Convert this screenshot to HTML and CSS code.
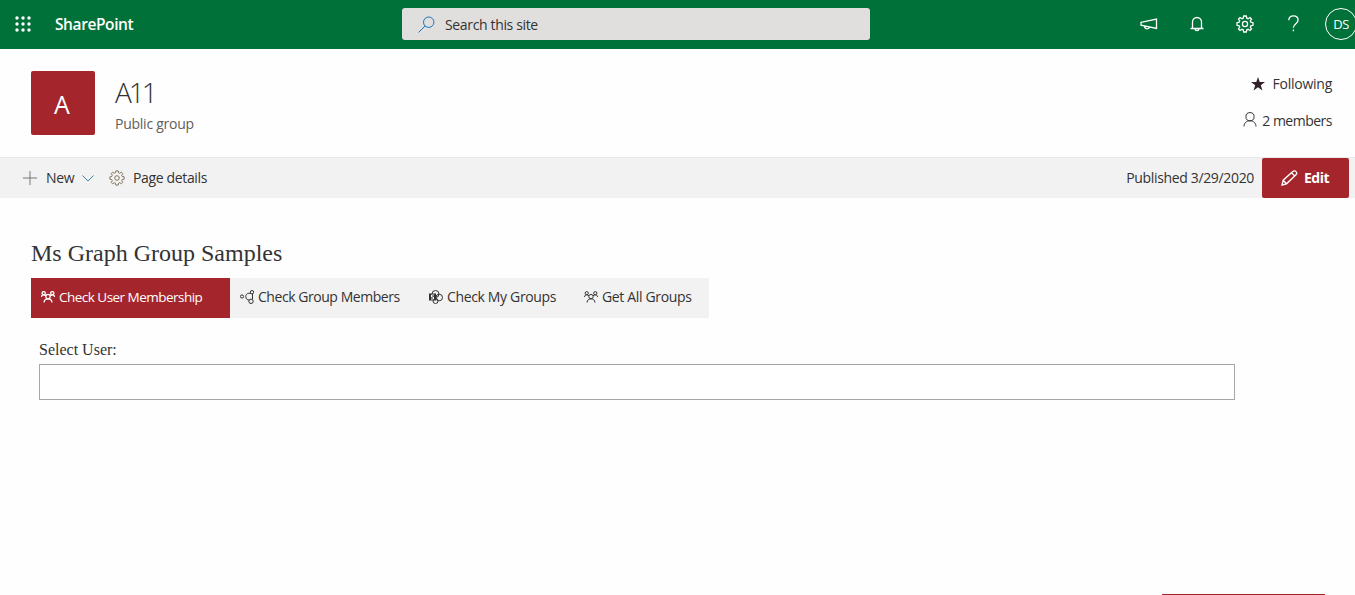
FILE: index.html
```html
<!DOCTYPE html>
<html lang="en">
<head>
<meta charset="utf-8">
<title>A11 - Ms Graph Group Samples</title>
<link rel="stylesheet" href="styles.css">
</head>
<body>
<svg class="defs" width="0" height="0">
  <symbol id="gear" viewBox="0 0 18 18"><path d="M7.700 1h2.600l.5 2.200 1.300.5 1.900-1.200L15.500 4l-1.200 1.900.5 1.300 2.200.5v2.600l-2.200.5-.5 1.300 1.200 1.900-1.500 1.500-1.900-1.200-1.300.5-.5 2.200H7.700l-.5-2.200-1.300-.5L4 15.500 2.500 14l1.200-1.900-.5-1.300L1 10.300V7.700l2.200-.5.5-1.300L2.500 4 4 2.500l1.900 1.200 1.300-.5z"/><circle cx="9" cy="9" r="2.600"/></symbol>
  <symbol id="team" viewBox="0 0 14 12"><circle cx="2.700" cy="2.200" r="1.600"/><circle cx="11.300" cy="2.200" r="1.600"/><circle cx="7" cy="5.600" r="2.200"/><path d="M.5 6c0-1.400.9-2.200 2.200-2.200 1 0 1.600.4 2.300 1M13.500 6c0-1.400-.9-2.200-2.200-2.200-1 0-1.600.4-2.300 1M3 11.500c.2-2.400 1.700-3.700 4-3.700s3.800 1.300 4 3.700"/></symbol>
</svg>

<header class="suite">
  <svg class="waffle" width="17" height="17" viewBox="0 0 17 17"><circle cx="2" cy="2" r="1.700"/><circle cx="8" cy="2" r="1.700"/><circle cx="14" cy="2" r="1.700"/><circle cx="2" cy="8" r="1.700"/><circle cx="8" cy="8" r="1.700"/><circle cx="14" cy="8" r="1.700"/><circle cx="2" cy="14" r="1.700"/><circle cx="8" cy="14" r="1.700"/><circle cx="14" cy="14" r="1.700"/></svg>
  <span class="brand">SharePoint</span>
  <div class="search">
    <svg class="line" width="17" height="17" viewBox="0 0 17 17"><circle cx="10.700" cy="6.200" r="5.200"/><path d="M7 10 .5 16.500"/></svg>
    <span>Search this site</span>
  </div>
  <nav class="actions">
    <svg class="line" width="18" height="12" viewBox="0 0 18 12"><path d="M1 4.300 16.500 1v9.500L1 7.200zM4.500 8c.2 3.600 4.500 3.600 5 1"/></svg>
    <svg class="line" width="14" height="16" viewBox="0 0 14 16"><path d="M2.500 12.500V6a4.500 4.500 0 0 1 9 0v6.500M.5 12.500h13M5 12.800c.3 2.300 3.700 2.300 4 0"/></svg>
    <svg class="line" width="18" height="18"><use href="#gear"/></svg>
    <svg class="line" width="11" height="17" viewBox="0 0 11 17"><path d="M.8 5.200C.8 2.400 2.600.8 5.400.8s4.700 1.600 4.700 4.200c0 3.600-4.700 3.800-4.700 7.700M5.400 14.600v1.700"/></svg>
    <span class="persona">DS</span>
  </nav>
</header>

<section class="site">
  <div class="logo">A</div>
  <div class="name">
    <div class="title">A11</div>
    <div class="kind">Public group</div>
  </div>
  <div class="meta">
    <div class="follow">
      <svg width="14" height="14" viewBox="0 0 14 14"><path d="M7 0 8.700 5H14L9.800 8.200l1.600 5.200L7 10.200l-4.400 3.200 1.600-5.200L0 5h5.300z"/></svg>
      <span>Following</span>
    </div>
    <div class="members">
      <svg class="line" width="14" height="15" viewBox="0 0 14 15"><circle cx="7" cy="4.700" r="4.100"/><path d="M1 14.500c0-3.400 2.400-5.700 6-5.700s6 2.300 6 5.700"/></svg>
      <span>2 members</span>
    </div>
  </div>
</section>

<div class="toolbar">
  <svg class="plus" width="14" height="14" viewBox="0 0 14 14"><path d="M7 0v14M0 7h14"/></svg>
  <span class="new">New</span>
  <svg class="line chevron" width="12" height="7" viewBox="0 0 12 7"><path d="m.5.5 5.500 5.500L11.500.5"/></svg>
  <svg class="line cog" width="16" height="16"><use href="#gear"/></svg>
  <span class="details">Page details</span>
  <span class="published">Published 3/29/2020</span>
  <button class="edit">
    <svg class="line" width="17" height="16" viewBox="0 0 17 16"><path d="m1 15 1.200-4.800L11.800 1.500c1-.9 2.400-.8 3.200.1.900.9.900 2.200 0 3.100L5.500 13.800zM10.500 2.700l3.300 3.300M2.200 10.200l3.300 3.600"/></svg>
    <span>Edit</span>
  </button>
</div>

<main class="page">
  <h1>Ms Graph Group Samples</h1>
  <div class="tabs">
    <div class="tab active"><svg class="line" width="14" height="12"><use href="#team"/></svg><span>Check User Membership</span></div>
    <div class="tab group"><svg class="line" width="14" height="14" viewBox="0 0 14 14"><circle cx="2" cy="6.500" r="1.600"/><circle cx="12" cy="2.200" r="1.700"/><circle cx="11" cy="11.300" r="2.200"/><path d="M11 3.600C8 2.500 5.800 4 5.800 6.500s1.600 3.700 3.500 3.600M12.500 4v5"/></svg><span>Check Group Members</span></div>
    <div class="tab mine"><svg class="line" width="14" height="14" viewBox="0 0 14 14"><circle cx="6.500" cy="4" r="3.500"/><circle cx="10.200" cy="7.500" r="3.300"/><circle cx="6.500" cy="11" r="2.500"/><path class="solid" d="M0 3.500h7v7H0z"/><path class="mark" d="M5 5H2.500v2h2v2H2"/></svg><span>Check My Groups</span></div>
    <div class="tab all"><svg class="line" width="14" height="12"><use href="#team"/></svg><span>Get All Groups</span></div>
  </div>
  <label for="user">Select User:</label>
  <input id="user" type="text">
  <div class="panel"></div>
</main>
</body>
</html>
```
FILE: styles.css
```css
* { box-sizing: border-box; }
body {
  margin: 0;
  height: 595px;
  display: flex;
  flex-direction: column;
  overflow: hidden;
  background: #fefefe;
  color: #333;
  font: 14px/20px "Open Sans", "Noto Sans", sans-serif;
}
svg { display: block; flex: none; }
.defs { position: absolute; }
.line { fill: none; stroke: currentColor; stroke-width: 1; }
span { white-space: nowrap; }

.suite {
  height: 49px;
  flex: none;
  display: flex;
  align-items: center;
  background: #007239;
  color: #fff;
}
.suite > * { flex: none; }
.waffle { fill: #fff; margin-left: 15px; }
.brand { width: 347px; margin-left: 23px; padding-bottom: 2px; font-size: 15.500px; font-weight: 600; letter-spacing: -.4px; }
.search {
  width: 468px;
  height: 32px;
  display: flex;
  align-items: center;
  gap: 10px;
  margin-bottom: 1px;
  padding-left: 16px;
  border-radius: 3px;
  background: #e1dfdd;
  color: #333;
}
.search svg { color: #1674bd; }
.search span { padding-top: 2px; letter-spacing: -.35px; }
.actions { display: flex; align-items: center; margin-left: 270px; padding-bottom: 2px; }
.actions svg:nth-child(1) { margin-right: 32px; }
.actions svg:nth-child(2) { margin-right: 32px; }
.actions svg:nth-child(3) { margin-right: 34px; }
.actions svg:nth-child(4) { margin-right: 26px; }
.actions .line { stroke-width: 1.300; }
.persona {
  flex: none;
  width: 32px;
  height: 32px;
  border: 1px solid #fff;
  border-radius: 50%;
  text-align: center;
  font-size: 13px;
  line-height: 31px;
  letter-spacing: -.5px;
}

.site { height: 108px; flex: none; display: flex; padding: 22px 23px 0 31px; }
.logo {
  width: 64px;
  height: 64px;
  padding-right: 2px;
  border-radius: 2px;
  background: #a4262c;
  color: #fff;
  text-align: center;
  font-size: 25px;
  line-height: 67px;
}
.name { margin-left: 20px; }
.title { height: 43px; font-size: 28px; font-weight: 300; line-height: 43px; letter-spacing: -3px; }
.kind { color: #605e5c; letter-spacing: -.25px; }
.meta { margin-left: auto; padding-top: 3px; display: flex; flex-direction: column; align-items: flex-end; gap: 17px; }
.follow, .members { display: flex; align-items: center; }
.follow { gap: 8px; letter-spacing: -.25px; }
.follow svg { fill: #32202a; }
.members { gap: 5px; letter-spacing: -.5px; }
.members svg { margin-bottom: 4px; }

.toolbar {
  height: 41px;
  flex: none;
  display: flex;
  align-items: center;
  padding: 0 6px 0 23px;
  border-top: 1px solid #e8e8e8;
  background: #f3f2f2;
}
.plus { stroke: #777; }
.new { width: 28px; margin-left: 9px; letter-spacing: -.3px; }
.chevron { margin-left: 8px; color: #3c83a7; }
.cog { margin-left: 15px; color: #77664f; }
.details { margin-left: 8px; letter-spacing: -.35px; }
.published { margin-left: auto; letter-spacing: -.34px; }
.edit {
  width: 87px;
  height: 40px;
  display: flex;
  align-items: center;
  gap: 6px;
  margin-left: 8px;
  padding: 0 0 0 19px;
  border: 0;
  border-radius: 2px;
  background: #a4262c;
  color: #fff;
  font: 700 14px/20px "Open Sans", sans-serif;
  letter-spacing: -.5px;
}
.edit .line { stroke-width: 1.300; }

.page { flex: 1; display: flex; flex-direction: column; padding: 40px 30px 0 31px; }
h1 { margin: 0; height: 40px; font: 400 24px/31px "Liberation Serif", serif; }
.tabs { width: 678px; height: 40px; display: flex; background: #f3f2f2; }
.tab { display: flex; align-items: center; gap: 4px; padding: 0 0 2px 10px; }
.active { width: 199px; background: #a4262c; color: #fff; font-size: 13.500px; letter-spacing: -.52px; }
.active .line { stroke-width: 1.300; }
.group { width: 189px; letter-spacing: -.45px; }
.mine { width: 155px; letter-spacing: -.35px; }
.all { width: 135px; letter-spacing: -.35px; }
.solid { fill: #333; stroke: none; }
.mark { stroke: #fff; }
label { margin: 22px 0 4px 8px; font: 16px/20px "Liberation Serif", serif; }
input { width: 1196px; height: 36px; margin-left: 8px; border: 1px solid #a6a6a6; background: #fff; }
.panel { width: 163px; height: 1px; margin-top: auto; align-self: flex-end; background: #a4262c; }
```
